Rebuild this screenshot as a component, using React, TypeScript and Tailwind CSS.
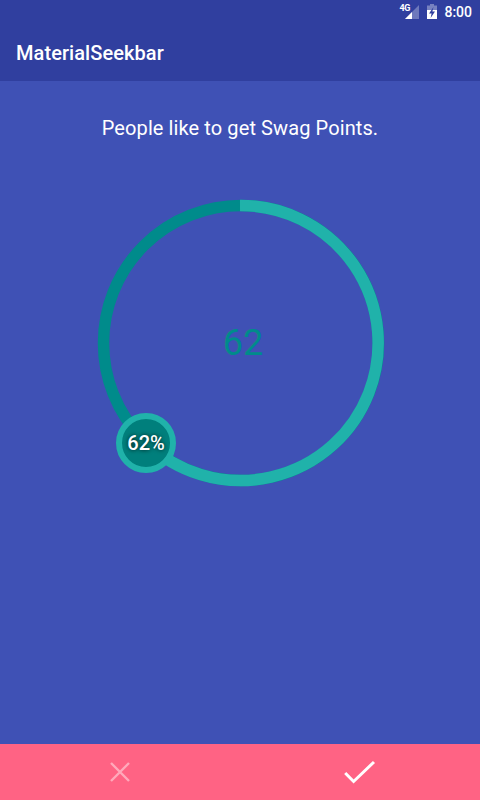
import React from "react";

const StatusBar: React.FC = () => {
  return (
    <div className="h-6 flex items-center justify-end pr-2 text-white">
      <div className="relative w-[22px] h-6 mr-[6px]">
        <span className="absolute left-0 top-[3px] text-[9px] leading-[11px] font-bold tracking-[-0.3px]">4G</span>
        <svg width="22" height="24" viewBox="0 0 22 24" className="absolute left-0 top-0">
          <path d="M20 5 V19 H6 Z" fill="#fff" fillOpacity="0.3" />
          <path d="M13 12 V19 H6 Z" fill="#fff" />
        </svg>
      </div>
      <svg width="10" height="15" viewBox="0 0 10 15" className="mr-[7px] mb-[1px]">
        <path d="M3 0 H7 V1.5 H10 V15 H0 V1.5 H3 Z" fill="#fff" fillOpacity="0.35" />
        <path d="M0 6 H10 V15 H0 Z" fill="#fff" />
        <path d="M6.5 3 L2 9.5 H4.6 L3.6 14 L8 7.5 H5.4 Z" fill="#303F9F" />
      </svg>
      <span className="text-[14px] font-medium">8:00</span>
    </div>
  );
};

const Ring: React.FC = () => {
  return (
    <div className="relative w-[288px] h-[288px] ml-[97px] mt-[58px]">
      <svg width="288" height="288" viewBox="0 0 288 288">
        <circle cx="144" cy="144" r="137.5" fill="none" stroke="#008B8B" strokeWidth="11.5" />
        <path
          d="M143 6.5 A137.5 137.5 0 1 1 49.5 244.2"
          fill="none"
          stroke="#20B2AA"
          strokeWidth="11.5"
        />
      </svg>
      <div className="absolute inset-0 flex items-center justify-center pl-[4px] text-[36px] text-[#008B8B]">
        62
      </div>
      <div className="absolute left-[19px] top-[214px] w-[60px] h-[60px] rounded-full bg-[#007F7C] border-[6px] border-[#20B2AA] flex items-center justify-center text-white text-[20px] font-medium [text-shadow:0_0_4px_rgba(0,0,0,0.8)]">
        62%
      </div>
    </div>
  );
};

export default function App() {
  return (
    <div className="w-[480px] h-[800px] flex flex-col bg-[#3F51B5] font-['Roboto',sans-serif]">
      <div className="bg-[#303F9F]">
        <StatusBar />
        <div className="h-[57px] flex items-center pl-4 text-white text-[20px] font-medium tracking-[0.07px]">MaterialSeekbar</div>
      </div>
      <div className="flex-1">
        <p className="mt-[34px] text-center text-white text-[20px] leading-[26px] tracking-[0.1px]">People like to get Swag Points.</p>
        <Ring />
      </div>
      <div className="h-14 bg-[#FF6384] flex">
        <div className="flex-1 flex items-center justify-center">
          <svg width="20" height="20" viewBox="0 0 20 20" fill="none" stroke="#fff" strokeOpacity="0.45" strokeWidth="2.4">
            <path d="M1 1 L19 19 M19 1 L1 19" />
          </svg>
        </div>
        <div className="flex-1 flex items-center justify-center">
          <svg width="32" height="24" viewBox="0 0 32 24" fill="none" stroke="#fff" strokeWidth="3">
            <path d="M1.2 13 L9.6 21.5 L30 2" />
          </svg>
        </div>
      </div>
    </div>
  );
}
